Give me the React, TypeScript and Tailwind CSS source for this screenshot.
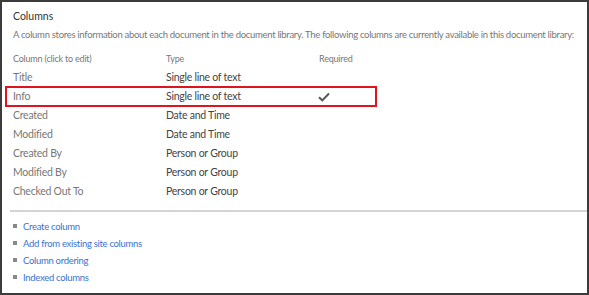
import React from "react";

const rows = [
  { name: "Title", type: "Single line of text", req: false },
  { name: "Info", type: "Single line of text", req: true },
  { name: "Created", type: "Date and Time", req: false },
  { name: "Modified", type: "Date and Time", req: false },
  { name: "Created By", type: "Person or Group", req: false },
  { name: "Modified By", type: "Person or Group", req: false },
  { name: "Checked Out To", type: "Person or Group", req: false },
];

const links = ["Create column", "Add from existing site columns", "Column ordering", "Indexed columns"];

export default function App() {
  return (
    <div
      className="w-[589px] h-[295px] bg-white border-2 border-[#3c3c3c] overflow-hidden"
      style={{ fontFamily: '"Segoe UI", Lato, "Noto Sans", sans-serif' }}
    >
      <div className="pl-[11px] pt-[7px]">
        <div className="text-[10.5px] leading-[14px] text-[#333]">Columns</div>
        <div className="mt-[5px] text-[9.5px] leading-[13px] tracking-[-0.3px] text-[#777] whitespace-nowrap">
          A column stores information about each document in the document library. The following columns are currently available in this document library:
        </div>
        <div className="mt-[11px] flex text-[9px] leading-[13px] tracking-[-0.2px] text-[#777]">
          <div className="w-[153px]">Column (click to edit)</div>
          <div className="w-[153px]">Type</div>
          <div>Required</div>
        </div>
        <div className="mt-[3px] flex flex-col tracking-[-0.25px]">
          {rows.map((r) =>
            r.req ? (
              <div key={r.name} className="-ml-[8px] w-[372px] h-[21px] border-2 border-[#e0141e] flex items-center pl-[6px] text-[10.5px] my-[-1px]">
                <div className="w-[153px] text-[#777]">{r.name}</div>
                <div className="w-[152px] text-[#444]">{r.type}</div>
                <svg width="12" height="10" viewBox="0 0 12 10">
                  <path d="M1 5.2 L4.3 8.4 L11 1.5" fill="none" stroke="#555" strokeWidth="2" />
                </svg>
              </div>
            ) : (
              <div key={r.name} className="flex h-[19px] items-center text-[10.5px]">
                <div className="w-[153px] text-[#777]">{r.name}</div>
                <div className="text-[#444]">{r.type}</div>
              </div>
            )
          )}
        </div>
      </div>
      <div className="mt-[9px] ml-[8px] border-t-2 border-[#d4d4d4]" />
      <div className="pl-[11px] pt-[7px] flex flex-col">
        {links.map((l) => (
          <div key={l} className="flex items-center h-[17px]">
            <span className="w-[4px] h-[4px] bg-[#888] mr-[6px] -mt-[4px]" />
            <span className="text-[9.5px] tracking-[-0.3px] text-[#3a72cf]">{l}</span>
          </div>
        ))}
      </div>
    </div>
  );
}
